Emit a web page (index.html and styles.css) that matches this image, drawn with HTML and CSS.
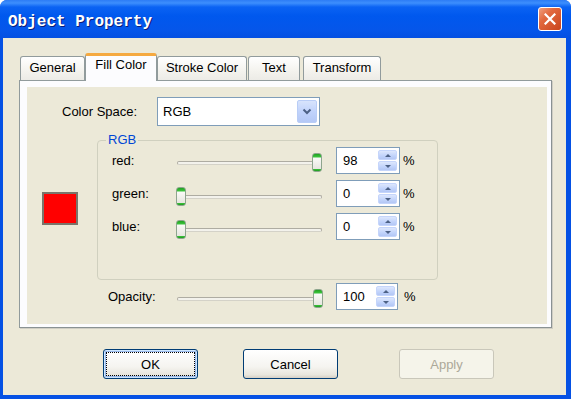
FILE: index.html
```html
<!DOCTYPE html>
<html>
<head>
<title>Object Property</title>
<meta charset="UTF-8">
<link rel="stylesheet" href="styles.css">
</head>
<body>

<div class="window">
  <div class="titlebar">
    <span class="title">Object Property</span>
    <div class="closeBtn">
      <svg width="12" height="12" viewBox="0 0 12 12"><path d="M1.5 1.5 L10.5 10.5 M10.5 1.5 L1.5 10.5" stroke="#fff" stroke-width="2.2" stroke-linecap="square" fill="none"/></svg>
    </div>
  </div>

  <div class="client">
    <div class="tabstrip">
      <div class="tab tabGeneral">General</div>
      <div class="tab selected tabFill">Fill Color</div>
      <div class="tab tabStroke">Stroke Color</div>
      <div class="tab tabText">Text</div>
      <div class="tab tabTransform">Transform</div>
    </div>

    <div class="tabpage">
      <div class="pagePanel">

        <div class="csRow">
          <span class="csLabel">Color Space:</span>
          <div class="combo">
            <span class="comboText">RGB</span>
            <span class="comboBtn">
              <svg width="10" height="7" viewBox="0 0 10 7"><path d="M1.5 1.5 L5 5 L8.5 1.5" stroke="#4d6185" stroke-width="2" fill="none"/></svg>
            </span>
          </div>
        </div>

        <div class="mixRow">
          <div class="swatch"></div>
          <fieldset class="rgbGroup">
            <legend>RGB</legend>

            <div class="chanRow">
              <span class="chanLabel">red:</span>
              <div class="slider"><div class="groove"></div><div class="thumb" style="left:136px"></div></div>
              <div class="spin">
                <span class="spinVal">98</span>
                <div class="spinBtns"><span class="spinUp"></span><span class="spinDown"></span></div>
              </div>
              <span class="pct">%</span>
            </div>

            <div class="chanRow">
              <span class="chanLabel">green:</span>
              <div class="slider low"><div class="groove"></div><div class="thumb" style="left:0px"></div></div>
              <div class="spin">
                <span class="spinVal">0</span>
                <div class="spinBtns"><span class="spinUp"></span><span class="spinDown"></span></div>
              </div>
              <span class="pct">%</span>
            </div>

            <div class="chanRow">
              <span class="chanLabel">blue:</span>
              <div class="slider low"><div class="groove"></div><div class="thumb" style="left:0px"></div></div>
              <div class="spin">
                <span class="spinVal">0</span>
                <div class="spinBtns"><span class="spinUp"></span><span class="spinDown"></span></div>
              </div>
              <span class="pct">%</span>
            </div>
          </fieldset>
        </div>

        <div class="opacityRow">
          <span class="opLabel">Opacity:</span>
          <div class="slider"><div class="groove"></div><div class="thumb" style="left:137px"></div></div>
          <div class="spin opSpin">
            <span class="spinVal">100</span>
            <div class="spinBtns"><span class="spinUp"></span><span class="spinDown"></span></div>
          </div>
          <span class="pct opPct">%</span>
        </div>

      </div>
    </div>

    <div class="btnRow">
      <button class="dlgBtn focused">OK</button>
      <button class="dlgBtn cancelBtn">Cancel</button>
      <button class="dlgBtn applyBtn" disabled>Apply</button>
    </div>
  </div>
</div>

</body>
</html>
```

FILE: styles.css
```css
html, body {
  margin: 0;
  padding: 0;
  background: #fff;
  font-family: "Liberation Sans", Arial, sans-serif;
  font-size: 13px;
  color: #000;
}

/* window frame */
.window {
  width: 571px;
  height: 399px;
  display: flex;
  flex-direction: column;
  background: #0551e4;
  border-radius: 7px 7px 0 0;
  overflow: hidden;
}
.titlebar {
  flex: none;
  height: 38px;
  display: flex;
  align-items: flex-start;
  padding: 0 9px 0 8px;
  box-sizing: border-box;
  background: linear-gradient(to bottom, #2d7cf5 0px, #3d8ffd 3px, #0b63f3 7px, #0058ee 16px, #0556ea 30px, #0450e2 38px);
}
.title {
  margin-top: 12px;
  font-family: "Liberation Mono", "Courier New", monospace;
  font-weight: bold;
  font-size: 16px;
  line-height: 20px;
  color: #fff;
  text-shadow: 1px 1px 0 #0a1d7a;
}
.closeBtn {
  margin: 7px 0 0 auto;
  width: 22px;
  height: 22px;
  border: 1px solid #fff;
  border-radius: 3px;
  background: linear-gradient(135deg, #f0a080 0%, #e2693f 35%, #c9441c 100%);
  display: flex;
  align-items: center;
  justify-content: center;
}

.client {
  flex: 1;
  margin: 0 5px 4px 3px;
  background: #ece9d8;
  padding: 15px 14px 0 16px;
  display: flex;
  flex-direction: column;
}

/* tabs */
.tabstrip {
  display: flex;
  align-items: flex-end;
  height: 27px;
  margin-left: 1px;
}
.tab {
  box-sizing: border-box;
  height: 24px;
  line-height: 22px;
  text-align: center;
  border: 1px solid #919b9c;
  border-bottom: none;
  border-radius: 3px 3px 0 0;
  background: linear-gradient(to bottom, #fff, #f4f3ee 60%, #ecebe6);
}
.tab.selected {
  position: relative;
  z-index: 1;
  height: 28px;
  margin-bottom: -1px;
  line-height: 18px;
  border-top: 3px solid #f5a940;
  background: #fcfcfe;
}
.tabGeneral { width: 65px; }
.tabFill { width: 72px; }
.tabStroke { width: 90px; }
.tabText { width: 52px; margin-left: 1px; }
.tabTransform { width: 78px; margin-left: 3px; }

.tabpage {
  height: 248px;
  box-sizing: border-box;
  border: 1px solid #919b9c;
  border-right-color: #8a9293;
  border-bottom-color: #8a9293;
  background: #fcfcfe;
  padding: 6px 4px 3px 7px;
  box-shadow: 1px 1px 0 #d0cec4;
}
.pagePanel {
  height: 100%;
  background: #ece9d8;
}

/* colour space */
.csRow {
  display: flex;
  align-items: center;
  padding: 10px 0 0 35px;
}
.csLabel {
  width: 95px;
}
.combo {
  width: 163px;
  height: 29px;
  box-sizing: border-box;
  border: 1px solid #7f9db9;
  background: #fff;
  display: flex;
  align-items: center;
  padding: 2px;
}
.comboText {
  flex: 1;
  padding-left: 3px;
}
.comboBtn {
  width: 20px;
  height: 23px;
  box-sizing: border-box;
  border: 1px solid #b9cdf6;
  border-radius: 2px;
  background: linear-gradient(to bottom, #d8e4fc, #c1d3fb 50%, #b4c8f6);
  display: flex;
  align-items: center;
  justify-content: center;
}

/* swatch and rgb group */
.mixRow {
  display: flex;
  align-items: center;
  margin-top: 7px;
}
.swatch {
  width: 36px;
  height: 33px;
  box-sizing: border-box;
  margin: 3px 0 0 15px;
  border: 2px solid #7a746a;
  background: #ff0000;
}
.rgbGroup {
  margin: 0 0 0 19px;
  width: 341px;
  height: 147px;
  box-sizing: border-box;
  padding: 0 0 0 14px;
  border: 1px solid #d0d0bf;
  border-radius: 4px;
}
.rgbGroup legend {
  padding: 0 2px;
  margin-left: -6px;
  line-height: 14px;
  color: #0046d5;
}
.chanRow {
  display: flex;
  align-items: center;
  height: 27px;
  margin-bottom: 6px;
}
.chanLabel {
  width: 64px;
}

/* trackbar */
.slider {
  position: relative;
  width: 147px;
  height: 19px;
  margin-top: 4px;
}
.slider.low {
  margin-top: 5px;
}
.groove {
  position: absolute;
  left: 1px;
  right: 1px;
  top: 8px;
  height: 4px;
  box-sizing: border-box;
  border: 1px solid #aeaca2;
  border-bottom-color: #d4d2c8;
  border-radius: 2px;
  background: #f3f2ec;
}
.thumb {
  position: absolute;
  top: 0;
  width: 10px;
  height: 19px;
  box-sizing: border-box;
  border: 1px solid #8ea58e;
  border-radius: 3px;
  background: linear-gradient(to bottom, #21a121 0, #3cc43c 3px, #fafaf7 4px, #e6e5df 15px, #3cc43c 15px, #1e9a1e 100%);
}

/* spin box */
.spin {
  width: 64px;
  height: 27px;
  box-sizing: border-box;
  margin-left: 13px;
  border: 1px solid #7f9db9;
  background: #fff;
  display: flex;
  align-items: center;
  padding: 2px 2px 2px 6px;
}
.spinVal {
  flex: 1;
}
.spinBtns {
  display: flex;
  flex-direction: column;
  gap: 1px;
  width: 19px;
  height: 21px;
}
.spinUp, .spinDown {
  flex: 1;
  box-sizing: border-box;
  border: 1px solid #c5d5fb;
  border-radius: 2px;
  background: linear-gradient(to bottom, #dde7fd, #c1d3fb 60%, #b3c7f5);
  display: flex;
  align-items: center;
  justify-content: center;
}
.spinUp::after, .spinDown::after {
  content: "";
  border-left: 3px solid transparent;
  border-right: 3px solid transparent;
}
.spinUp::after {
  border-bottom: 3px solid #4d6185;
}
.spinDown::after {
  border-top: 3px solid #4d6185;
}
.pct {
  margin-left: 3px;
}

/* opacity */
.opacityRow {
  display: flex;
  align-items: center;
  height: 27px;
  margin: 3px 0 0 81px;
}
.opLabel {
  width: 68px;
}
.opSpin {
  width: 62px;
}
.opPct {
  margin-left: 6px;
}

/* dialog buttons */
.btnRow {
  display: flex;
  padding: 21px 0 0 84px;
}
.dlgBtn {
  width: 95px;
  height: 30px;
  border: 1px solid #003c74;
  border-radius: 3px;
  background: linear-gradient(to bottom, #fff 0%, #f5f4f0 60%, #e8e6dd 88%, #d6d0c5 100%);
  font-family: "Liberation Sans", Arial, sans-serif;
  font-size: 13px;
  color: #000;
  padding: 0;
}
.dlgBtn.focused {
  box-shadow: inset 0 0 0 1px #cee7ff, inset 0 0 0 2px #98b8ea;
  outline: 1px dotted #000;
  outline-offset: -4px;
}
.cancelBtn {
  margin-left: 45px;
}
.applyBtn {
  margin-left: 61px;
  border-color: #c9c7ba;
  background: #f5f4ea;
  color: #aca899;
}
```
